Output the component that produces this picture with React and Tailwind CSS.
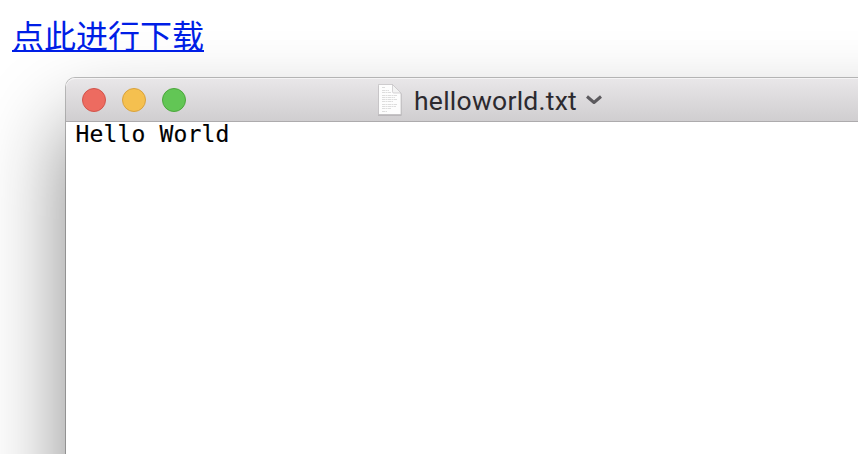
function DocumentIcon() {
  return (
    <svg className="block h-[34px] w-[28px] shrink-0" viewBox="0 0 28 34" fill="none">
      <path d="M2 3h15l8.5 8v21.8H2z" fill="#8b898b" opacity=".45" />
      <path d="M2.5 1.5h14l8.5 9v21H2.5z" fill="#fdfdfd" stroke="#bebcbe" strokeWidth=".7" />
      <path d="M16.5 1.5v7.2q0 1.3 1.3 1.3H25z" fill="#f3f3f3" stroke="#c4c2c4" strokeWidth=".7" />
      <path
        d="M6 4.5h3.5M6 7.5h7M6 9.5h9M6 12.5h15M6 14.5h13M6 16.5h15M6 18.5h11M6 21.5h15M6 23.5h14M6 25.5h9M6 28.5h5"
        stroke="#d4d4d4"
        strokeWidth=".8"
        strokeDasharray="3 .5 2 .5"
      />
    </svg>
  );
}

function TitleBar() {
  return (
    <div className="flex h-[44px] items-center rounded-tl-[9px] border-b border-[#adabad] bg-gradient-to-b from-[#e9e7e9] to-[#d0ced0] pl-[16px] pt-px shadow-[inset_0_1px_0_#f5f4f5]">
      <div className="flex w-[294px] shrink-0 gap-4">
        <span className="size-6 rounded-full border border-[#d2544b] bg-[#ed6b60]" />
        <span className="size-6 rounded-full border border-[#d9a23d] bg-[#f5c04f]" />
        <span className="size-6 rounded-full border border-[#4ca73c] bg-[#62c655]" />
      </div>
      <DocumentIcon />
      <span className="ml-[10px] w-[164px] whitespace-nowrap pt-px font-['Roboto',sans-serif] text-[26.5px] leading-[30px] tracking-[0.25px] text-[#2c2a2f]">
        helloworld.txt
      </span>
      <svg className="ml-[7px] h-[12px] w-[18px] shrink-0" viewBox="0 0 18 12" fill="none">
        <path d="M2 2.5L9 8.5L16 2.5" stroke="#5c5a5e" strokeWidth="3" strokeLinejoin="round" />
      </svg>
    </div>
  );
}

export default function App() {
  return (
    <div className="h-[454px] w-[858px] overflow-hidden bg-white">
      <div className="flex h-[78px] items-start pl-[12px] pt-[13px]">
        <a
          href="#"
          className="h-[39px] border-b-2 border-[#001ee6] font-['Noto_Sans_CJK_SC',sans-serif] text-[32px] leading-[42px] text-[#001ee6]"
        >
          <span className="block">点此进行下载</span>
        </a>
      </div>
      <div className="ml-[66px] h-[500px] w-[1000px] rounded-tl-[9px] bg-white shadow-[0_0_0_1px_rgba(0,0,0,0.25),0_46px_84px_rgba(0,0,0,0.48)]">
        <TitleBar />
        <pre className="pl-[9.5px] font-['DejaVu_Sans_Mono',monospace] text-[23px] leading-[25px] tracking-[0.15px] text-black [-webkit-text-stroke:0.15px_black]">
          Hello World
        </pre>
      </div>
    </div>
  );
}
